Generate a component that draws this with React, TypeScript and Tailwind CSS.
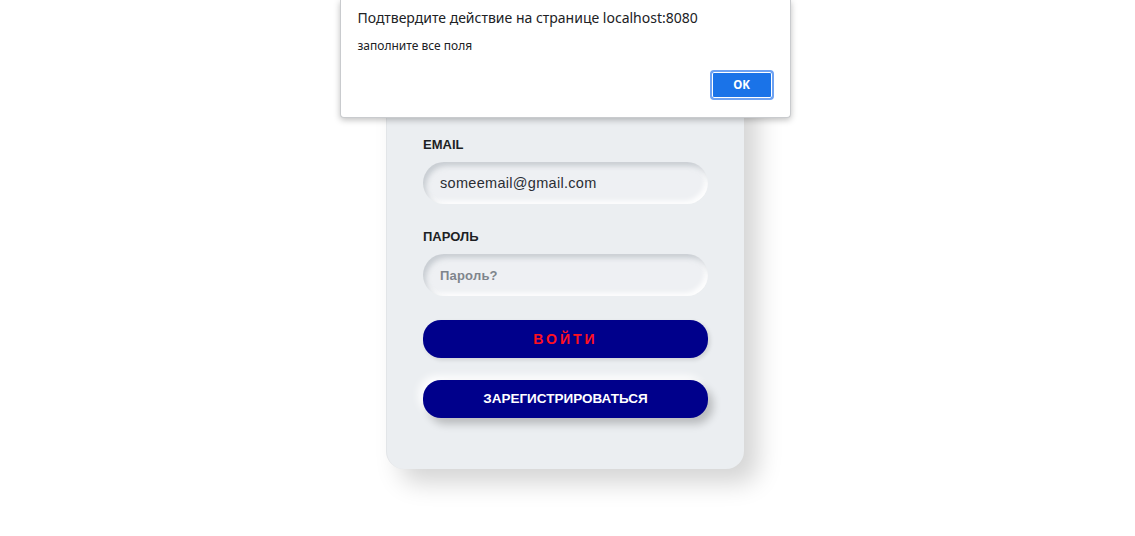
import { useState } from "react";

const LoginForm = () => {
  const [email, setEmail] = useState("someemail@gmail.com");
  const [password, setPassword] = useState("");

  return (
    <div className="flex justify-center pr-[5px]">
      {/* Card */}
      <form
        onSubmit={(e) => e.preventDefault()}
        className="w-[358px] bg-[#ebeef1] rounded-b-[18px] pt-[137px] pb-[51px] px-[36px] shadow-[14px_14px_24px_rgba(0,0,0,0.17),-10px_-6px_18px_rgba(255,255,255,0.9)] border-l border-[#e2e5e8] font-['Liberation_Sans',Arial,sans-serif]"
      >
        <label className="block text-[13px] leading-[15px] font-bold text-[#1d1f24] mb-[10px]">
          EMAIL
        </label>
        <input
          value={email}
          onChange={(e) => setEmail(e.target.value)}
          className="w-full h-[42px] rounded-full bg-[#eef0f3] px-[17px] text-[14.5px] tracking-[0.3px] text-[#2a2d33] outline-none shadow-[inset_3px_4px_5px_rgba(170,176,184,0.55),inset_-3px_-3px_5px_rgba(255,255,255,0.95)]"
        />

        <label className="block mt-[25px] text-[13px] leading-[15px] font-bold text-[#1d1f24] mb-[10px]">
          ПАРОЛЬ
        </label>
        <input
          type="password"
          placeholder="Пароль?"
          value={password}
          onChange={(e) => setPassword(e.target.value)}
          className="w-full h-[42px] rounded-full bg-[#eef0f3] px-[17px] text-[13px] font-bold tracking-[0.2px] text-[#2a2d33] placeholder:text-[#7f858c] outline-none shadow-[inset_3px_4px_5px_rgba(170,176,184,0.55),inset_-3px_-3px_5px_rgba(255,255,255,0.95)]"
        />

        <button
          type="submit"
          className="mt-[24px] w-full h-[38px] rounded-[18px] bg-[#00008b] text-[#ff1020] text-[14px] font-bold tracking-[3px] shadow-[2px_2px_4px_rgba(0,0,0,0.12)]"
        >
          ВОЙТИ
        </button>

        <button
          type="button"
          className="mt-[22px] w-full h-[38px] rounded-[18px] bg-[#00008b] text-white text-[13.5px] font-bold shadow-[5px_6px_8px_rgba(0,0,0,0.22),-4px_-4px_8px_rgba(255,255,255,1)]"
        >
          ЗАРЕГИСТРИРОВАТЬСЯ
        </button>
      </form>
    </div>
  );
};

// Browser confirm() dialog on top
const ConfirmDialog = () => (
  <div className="absolute top-0 left-1/2 -translate-x-[calc(50%+2.5px)] w-[451px] h-[118px] bg-white border border-t-0 border-[#c9cbce] rounded-b-[4px] shadow-[0_2px_6px_rgba(0,0,0,0.25)] px-[17px] pt-[8px] font-['Noto_Sans','Open_Sans',sans-serif]">
    <p className="text-[14px] leading-[20px] text-[#202124]">
      Подтвердите действие на странице localhost:8080
    </p>
    <p className="mt-[10px] text-[12px] leading-[16px] text-[#202124]">заполните все поля</p>
    <div className="flex justify-end mt-[16px] -mr-[1px]">
      <button className="w-[64px] h-[30px] rounded-[4px] bg-[#1a73e8] text-white text-[11.5px] font-bold border-2 border-[#6ea2f2] ring-1 ring-inset ring-white">
        OK
      </button>
    </div>
  </div>
);

export default function App() {
  return (
    <div className="relative min-h-screen bg-white overflow-hidden">
      <LoginForm />
      <ConfirmDialog />
    </div>
  );
}
